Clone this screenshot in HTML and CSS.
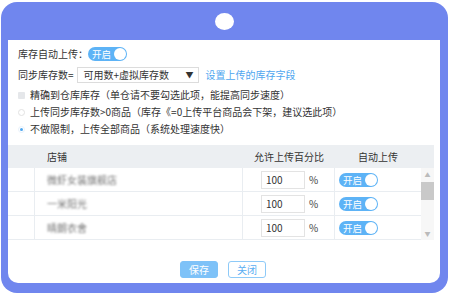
FILE: index.html
```html
<!DOCTYPE html>
<html lang="zh">
<head>
<meta charset="utf-8">
<link rel="stylesheet" href="styles.css">
</head>
<body>
<div class="frame">
  <div class="head"><span class="dot"></span></div>
  <div class="panel">
    <div class="row r1">
      <span class="lbl">库存自动上传：</span>
      <span class="toggle"><span class="tt">开启</span><span class="knob"></span></span>
    </div>
    <div class="row r2">
      <span class="lbl">同步库存数=</span>
      <div class="select"><span>可用数+虚拟库存数</span><span class="arrow">▼</span></div>
      <a class="link">设置上传的库存字段</a>
    </div>
    <div class="row r3"><span class="chk"></span><span>精确到仓库库存（单仓请不要勾选此项，能提高同步速度）</span></div>
    <div class="row r4"><span class="radio"></span><span>上传同步库存数&gt;0商品（库存《=0上传平台商品会下架，建议选此项）</span></div>
    <div class="row r5"><span class="radio on"></span><span>不做限制，上传全部商品（系统处理速度快）</span></div>

    <div class="table">
      <div class="thead">
        <div class="th"></div>
        <div class="th left">店铺</div>
        <div class="th">允许上传百分比</div>
        <div class="th">自动上传</div>
        <div class="th"></div>
      </div>
      <div class="tbody-wrap">
        <div class="tbody">
          <div class="tr">
            <div class="td"></div>
            <div class="td name"><span class="blur">微虾女装旗舰店</span></div>
            <div class="td pct"><span class="inp">100</span><span class="unit">%</span></div>
            <div class="td sw"><span class="toggle"><span class="tt">开启</span><span class="knob"></span></span></div>
          </div>
          <div class="tr">
            <div class="td"></div>
            <div class="td name"><span class="blur">一米阳光</span></div>
            <div class="td pct"><span class="inp">100</span><span class="unit">%</span></div>
            <div class="td sw"><span class="toggle"><span class="tt">开启</span><span class="knob"></span></span></div>
          </div>
          <div class="tr">
            <div class="td"></div>
            <div class="td name"><span class="blur">晴朗衣舍</span></div>
            <div class="td pct"><span class="inp">100</span><span class="unit">%</span></div>
            <div class="td sw"><span class="toggle"><span class="tt">开启</span><span class="knob"></span></span></div>
          </div>
        </div>
        <div class="scroll">
          <span class="sarrow">▲</span>
          <span class="thumb"></span>
          <span class="sarrow down">▼</span>
        </div>
      </div>
    </div>

    <div class="btns">
      <button class="btn save">保存</button>
      <button class="btn close">关闭</button>
    </div>
  </div>
</div>
</body>
</html>
```

FILE: styles.css
```css
html, body {
  margin: 0;
  padding: 0;
  background: #ffffff;
}
body {
  font-family: "Noto Sans CJK SC", "Noto Sans", sans-serif;
  font-size: 10px;
  color: #333333;
  width: 449px;
  height: 296px;
  overflow: hidden;
}
.frame {
  margin: 2px 1px 0 1px;
  width: 447px;
  height: 291px;
  box-sizing: border-box;
  background: #7086ee;
  border-radius: 16px;
  padding: 0 8px 10px 7px;
  display: flex;
  flex-direction: column;
}
.head {
  height: 38px;
  flex: none;
  display: flex;
  align-items: center;
  justify-content: center;
}
.dot {
  width: 19px;
  height: 17px;
  border-radius: 50%;
  background: #ffffff;
  margin-left: 1px;
}
.panel {
  flex: 1;
  background: #ffffff;
  border-radius: 0 0 10px 10px;
  padding: 7px 6px 0 10px;
  display: flex;
  flex-direction: column;
}
.row {
  display: flex;
  align-items: center;
  height: 16px;
  line-height: 16px;
  white-space: nowrap;
}
.r1 { height: 14px; }
.r2 { margin-top: 6px; }
.r3 { margin-top: 4px; }
.r4 { margin-top: 1px; }
.r5 { margin-top: 1px; }

.toggle {
  display: inline-flex;
  align-items: center;
  justify-content: space-between;
  width: 39px;
  height: 14px;
  box-sizing: border-box;
  border-radius: 7px;
  background: #5db3f6;
  padding: 0 1px 0 4px;
  color: #ffffff;
  font-size: 9.5px;
  line-height: 14px;
}
.knob {
  width: 12px;
  height: 12px;
  border-radius: 50%;
  background: #ffffff;
}
.select {
  margin-left: 3px;
  width: 122px;
  height: 16px;
  box-sizing: border-box;
  border: 1px solid #dcdcdc;
  display: flex;
  align-items: center;
  justify-content: space-between;
  padding: 0 4px 0 6px;
}
.arrow {
  font-size: 8px;
  color: #333;
}
.link {
  margin-left: 7px;
  color: #4ea6ef;
}
.chk {
  width: 7px;
  height: 7px;
  background: #e5e7ea;
  margin-right: 5px;
  border-radius: 1px;
}
.radio {
  width: 7px;
  height: 7px;
  box-sizing: border-box;
  border: 1px solid #e2e2e2;
  border-radius: 50%;
  margin-right: 5px;
  display: flex;
  align-items: center;
  justify-content: center;
}
.radio.on {
  border-color: #e8f2fc;
}
.radio.on::after {
  content: "";
  width: 3px;
  height: 3px;
  border-radius: 50%;
  background: #4ea6ef;
}

.table {
  margin: 8px 0 0 -10px;
  width: 426px;
}
.thead {
  display: grid;
  grid-template-columns: 27px 208px 92px 86px 13px;
  height: 23px;
  background: #eceff2;
  align-items: center;
}
.th {
  text-align: center;
  line-height: 23px;
}
.th.left {
  text-align: left;
  padding-left: 12px;
}
.tbody-wrap {
  display: flex;
}
.tbody {
  width: 413px;
}
.tr {
  display: grid;
  grid-template-columns: 27px 208px 92px 86px;
  height: 24px;
  box-sizing: border-box;
  border-bottom: 1px solid #e9edf1;
}
.td {
  display: flex;
  align-items: center;
  border-right: 1px solid #e9edf1;
}
.td.sw {
  border-right: none;
  padding-left: 4px;
}
.td.name {
  padding-left: 12px;
}
.blur {
  color: #777;
  filter: blur(1.3px);
}
.td.pct {
  justify-content: center;
  padding-left: 2px;
}
.inp {
  width: 44px;
  height: 18px;
  box-sizing: border-box;
  border: 1px solid #e3e3e3;
  padding-left: 4px;
  line-height: 16px;
}
.unit {
  margin-left: 4px;
  color: #444;
}
.scroll {
  width: 13px;
  height: 72px;
  position: relative;
  background: #f7f7f7;
  display: flex;
  flex-direction: column;
  align-items: center;
}
.sarrow {
  font-size: 6px;
  color: #bbbbbb;
  line-height: 10px;
  height: 10px;
  margin-top: 2px;
}
.thumb {
  width: 13px;
  height: 18px;
  background: #c9c9c9;
  margin-top: 2px;
}
.sarrow.down {
  margin-top: auto;
  margin-bottom: 1px;
}
.btns {
  margin-top: 21px;
  display: flex;
  justify-content: center;
  gap: 10px;
  padding-right: 6px;
}
.btn {
  font-family: inherit;
  font-size: 10px;
  width: 38px;
  height: 17px;
  box-sizing: border-box;
  border-radius: 3px;
  padding: 0;
  line-height: 15px;
}
.btn.save {
  background: #7ec2f8;
  border: 1px solid #7ec2f8;
  color: #ffffff;
}
.btn.close {
  background: #ffffff;
  border: 1px solid #8ecaf8;
  color: #5aaef2;
}
```
